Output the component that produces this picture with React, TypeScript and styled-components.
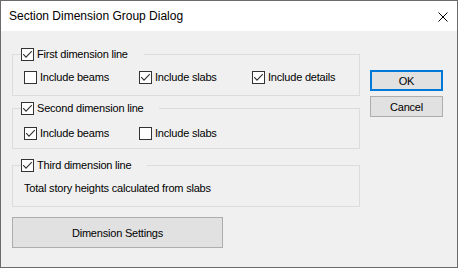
import React from "react";
import styled, { createGlobalStyle } from "styled-components";

const Global = createGlobalStyle`
  html, body { margin: 0; padding: 0; background: #ffffff; }
  * { box-sizing: border-box; }
`;

const UI_FONT = `"Liberation Sans", Arial, sans-serif`;

const Window = styled.div`
  width: 458px;
  height: 268px;
  border: 1px solid #6b6b6b;
  display: flex;
  flex-direction: column;
  background: #f0f0f0;
  font-family: ${UI_FONT};
  font-size: 11px;
  letter-spacing: -0.2px;
  color: #000;
`;

const TitleBar = styled.div`
  height: 30px;
  flex: none;
  background: #ffffff;
  display: flex;
  align-items: center;
  padding-left: 8px;
  font-size: 12px;
  letter-spacing: 0;
`;

const TitleText = styled.span`
  flex: 1;
`;

const CloseIcon = styled.svg`
  width: 10px;
  height: 10px;
  margin-right: 9px;
  margin-top: 1px;
`;

const Body = styled.div`
  flex: 1;
  display: flex;
  padding: 17px 0 0 11px;
`;

const LeftColumn = styled.div`
  width: 348px;
  display: flex;
  flex-direction: column;
`;

const RightColumn = styled.div`
  margin-left: 10px;
  padding-top: 22px;
  display: flex;
  flex-direction: column;
  gap: 5px;
`;

const Group = styled.fieldset<{ $pt: number; $pb: number; $mt: number }>`
  margin: ${(p) => p.$mt}px 0 0 0;
  border: 1px solid #dcdcdc;
  padding: ${(p) => p.$pt}px 0 ${(p) => p.$pb}px 0;
  min-width: 0;
`;

const Legend = styled.legend`
  margin-left: 8px;
  padding: 0 16px 0 0;
  height: 13px;
  line-height: 13px;
`;

const Row = styled.div`
  display: grid;
  grid-template-columns: 115px 113px auto;
  padding-left: 11px;
  height: 13px;
`;

const CheckItem = styled.label`
  display: inline-flex;
  align-items: center;
  gap: 3px;
  height: 13px;
  line-height: 13px;
  white-space: nowrap;
`;

const Box = styled.span`
  width: 13px;
  height: 13px;
  flex: none;
  border: 1px solid #333333;
  background: #ffffff;
  display: inline-flex;
`;

const Note = styled.div`
  padding-left: 11px;
  height: 13px;
  line-height: 13px;
`;

const WideButton = styled.button`
  margin-top: 10px;
  width: 211px;
  height: 31px;
  border: 1px solid #adadad;
  background: #e1e1e1;
  font-family: ${UI_FONT};
  font-size: 11px;
  letter-spacing: -0.2px;
  color: #000;
  padding: 0;
`;

const DialogButton = styled.button<{ $default?: boolean }>`
  width: 73px;
  height: 21px;
  border: ${(p) => (p.$default ? "2px solid #0078d7" : "1px solid #adadad")};
  background: #e1e1e1;
  font-family: ${UI_FONT};
  font-size: 11px;
  letter-spacing: -0.2px;
  color: #000;
  padding: 0;
`;

function Check({ checked, label }: { checked: boolean; label: string }) {
  return (
    <CheckItem>
      <Box>
        {checked && (
          <svg width="11" height="11" viewBox="0 0 11 11">
            <polyline
              points="1.2,5.2 4,8.2 9.8,2.2"
              fill="none"
              stroke="#333333"
              strokeWidth="1.1"
            />
          </svg>
        )}
      </Box>
      {label}
    </CheckItem>
  );
}

export default function App() {
  return (
    <>
      <Global />
      <Window>
        <TitleBar>
          <TitleText>Section Dimension Group Dialog</TitleText>
          <CloseIcon viewBox="0 0 10 10">
            <path d="M0.5 0.5 L9.5 9.5 M9.5 0.5 L0.5 9.5" stroke="#000" strokeWidth="1" />
          </CloseIcon>
        </TitleBar>
        <Body>
          <LeftColumn>
            <Group $pt={10} $pb={11} $mt={0}>
              <Legend>
                <Check checked label="First dimension line" />
              </Legend>
              <Row>
                <Check checked={false} label="Include beams" />
                <Check checked label="Include slabs" />
                <Check checked label="Include details" />
              </Row>
            </Group>
            <Group $pt={12} $pb={8} $mt={6}>
              <Legend>
                <Check checked label="Second dimension line" />
              </Legend>
              <Row>
                <Check checked label="Include beams" />
                <Check checked={false} label="Include slabs" />
              </Row>
            </Group>
            <Group $pt={10} $pb={11} $mt={10}>
              <Legend>
                <Check checked label="Third dimension line" />
              </Legend>
              <Note>Total story heights calculated from slabs</Note>
            </Group>
            <WideButton>Dimension Settings</WideButton>
          </LeftColumn>
          <RightColumn>
            <DialogButton $default>OK</DialogButton>
            <DialogButton>Cancel</DialogButton>
          </RightColumn>
        </Body>
      </Window>
    </>
  );
}
